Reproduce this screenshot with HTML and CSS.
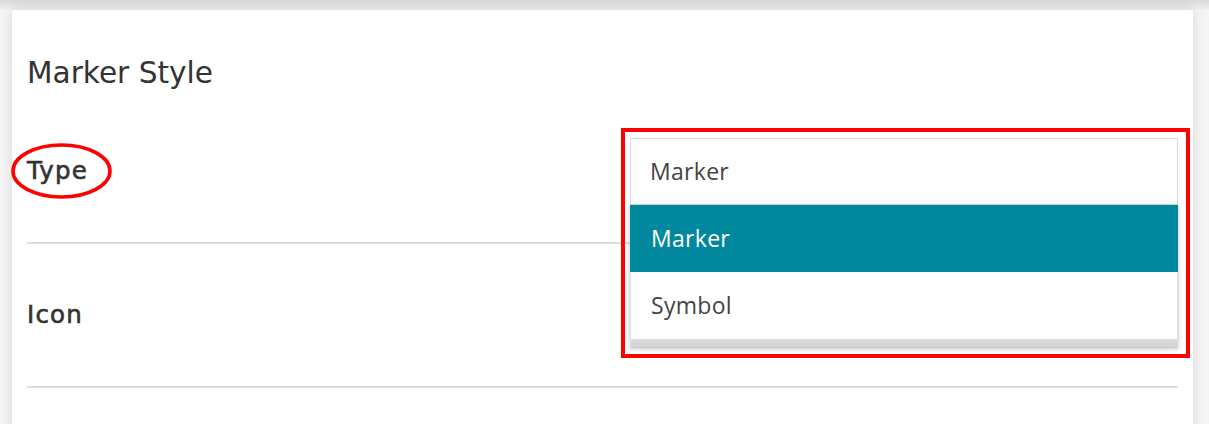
FILE: index.html
```html
<!DOCTYPE html>
<html lang="en">
<head>
<meta charset="utf-8">
<title>Marker Style</title>
<link rel="stylesheet" href="styles.css">
</head>
<body>
<div class="top-shade"></div>
<div class="card">
  <h2 class="title">Marker Style</h2>
  <div class="row">
    <div class="label-wrap">
      <span class="label">Type</span>
      <svg class="circle-mark" width="101" height="56" viewBox="0 0 101 56" aria-hidden="true">
        <ellipse cx="50.5" cy="28" rx="48.5" ry="26" fill="none" stroke="#ff0000" stroke-width="3.6"/>
      </svg>
    </div>
    <div class="select-wrap">
      <div class="select">Marker</div>
      <div class="options">
        <div class="option active">Marker</div>
        <div class="option">Symbol</div>
        <div class="options-scroll"></div>
      </div>
      <div class="highlight-box"></div>
    </div>
  </div>
  <div class="row">
    <div class="label-wrap">
      <span class="label">Icon</span>
    </div>
  </div>
</div>
</body>
</html>
```

FILE: styles.css
```css
html, body {
  margin: 0;
  padding: 0;
}

body {
  width: 1209px;
  height: 424px;
  overflow: hidden;
  background: #f5f5f5;
  font-family: "DejaVu Sans", Verdana, sans-serif;
  color: #333333;
}

.top-shade {
  height: 10px;
  background: linear-gradient(#d8d8d8, #f1f1f1);
}

.card {
  position: relative;
  margin: 0 16px 0 12px;
  padding: 0 15px;
  min-height: 460px;
  background: #ffffff;
  box-shadow: 0 0 12px rgba(0, 0, 0, 0.13);
}

.title {
  margin: 0;
  padding: 46px 0 10px;
  font-family: "DejaVu Sans", Verdana, sans-serif;
  font-weight: normal;
  font-size: 29.6px;
  line-height: 34px;
  color: #333333;
}

.row {
  display: flex;
  align-items: center;
  justify-content: space-between;
  height: 142px;
  border-bottom: 2px solid #dedede;
}

.label-wrap {
  position: relative;
  display: flex;
  align-items: center;
}

.label {
  font-family: "DejaVu Sans", Verdana, sans-serif;
  font-weight: normal;
  font-size: 24.5px;
  line-height: 30px;
  letter-spacing: 1.2px;
  color: #333333;
  -webkit-text-stroke: 0.6px #333333;
}

.circle-mark {
  position: absolute;
  left: -16px;
  top: -13px;
}

.select-wrap {
  position: relative;
  width: 548px;
}

.select {
  box-sizing: border-box;
  height: 67px;
  display: flex;
  align-items: center;
  padding: 0 19px;
  border: 1px solid #d9d9d9;
  background: #ffffff;
  font-family: "Open Sans", "Liberation Sans", sans-serif;
  font-size: 23px;
  letter-spacing: 0.3px;
  color: #444444;
}

.options {
  position: absolute;
  top: 67px;
  left: 0;
  right: 0;
  background: #ffffff;
  border-left: 1px solid #e2e2e2;
  border-right: 1px solid #dcdcdc;
  box-shadow: 0 1px 5px rgba(0, 0, 0, 0.22);
  z-index: 2;
}

.option {
  height: 67px;
  display: flex;
  align-items: center;
  padding: 0 20px;
  font-family: "Open Sans", "Liberation Sans", sans-serif;
  font-size: 23px;
  letter-spacing: 0.3px;
  color: #444444;
}

.option.active {
  margin: 0 -1px;
  padding: 0 21px;
  background: #01889f;
  color: #ffffff;
}

.options-scroll {
  height: 8px;
  background: linear-gradient(#dcdcdc, #d4d4d4);
  border-bottom: 1px solid #c8c8c8;
}

.highlight-box {
  position: absolute;
  left: -9px;
  top: -10px;
  right: -12px;
  bottom: -153px;
  border: 4px solid #ff0000;
  pointer-events: none;
  z-index: 3;
}
```
